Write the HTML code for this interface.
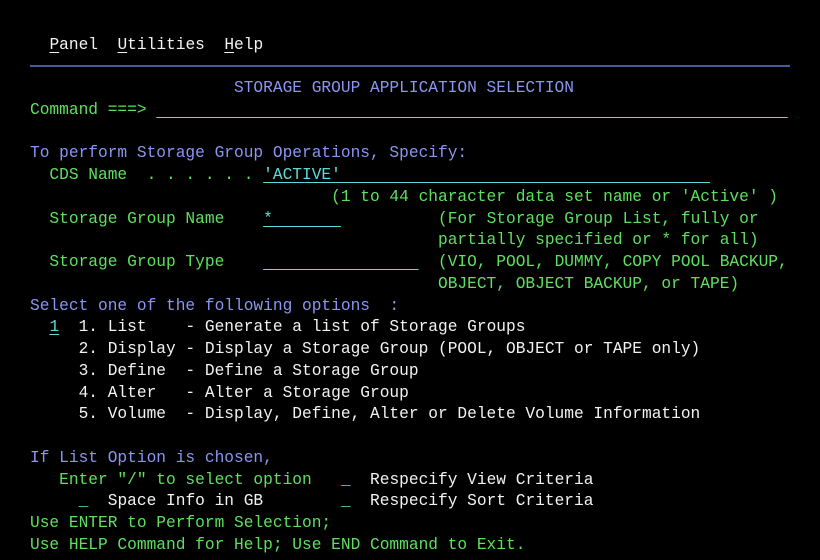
<!DOCTYPE html>
<html><head><meta charset="utf-8"><style>
html,body{margin:0;padding:0;background:#000;width:820px;height:560px;overflow:hidden}
.r{position:absolute;left:30px;height:22px;line-height:22px;font-family:"Liberation Mono",monospace;font-size:16.2px;white-space:pre;color:#f0f0f0}
.w{color:#f2f2f2}.g{color:#5ee05e}.b{color:#8a96f0}.t{color:#60d8d8}
.u{text-decoration:underline;text-underline-offset:3px}
.sep{position:absolute;left:30px;width:760px;top:65px;height:2px;background:#4a5a9a}
</style></head><body>
<div class="r w" style="top:34px">  <span class="u">P</span>anel  <span class="u">U</span>tilities  <span class="u">H</span>elp</div>
<div class="sep"></div>
<div class="r b" style="top:77px">                     STORAGE GROUP APPLICATION SELECTION</div>
<div class="r g" style="top:99px">Command ===> <span class="t u">                                                                 </span></div>
<div class="r b" style="top:142px">To perform Storage Group Operations, Specify:</div>
<div class="r g" style="top:164px">  CDS Name  . . . . . . <span class="t u">'ACTIVE'                                      </span></div>
<div class="r g" style="top:186px">                               (1 to 44 character data set name or 'Active' )</div>
<div class="r g" style="top:208px">  Storage Group Name    <span class="t u">*       </span>          (For Storage Group List, fully or</div>
<div class="r g" style="top:229px">                                          partially specified or * for all)</div>
<div class="r g" style="top:251px">  Storage Group Type    <span class="t u">                </span>  (VIO, POOL, DUMMY, COPY POOL BACKUP,</div>
<div class="r g" style="top:273px">                                          OBJECT, OBJECT BACKUP, or TAPE)</div>
<div class="r b" style="top:295px">Select one of the following options  :</div>
<div class="r w" style="top:316px">  <span class="t u">1</span>  1. List    - Generate a list of Storage Groups</div>
<div class="r w" style="top:338px">     2. Display - Display a Storage Group (POOL, OBJECT or TAPE only)</div>
<div class="r w" style="top:360px">     3. Define  - Define a Storage Group</div>
<div class="r w" style="top:382px">     4. Alter   - Alter a Storage Group</div>
<div class="r w" style="top:403px">     5. Volume  - Display, Define, Alter or Delete Volume Information</div>
<div class="r b" style="top:447px">If List Option is chosen,</div>
<div class="r g" style="top:469px">   Enter "/" to select option   <span class="t">_</span>  <span class="w">Respecify View Criteria</span></div>
<div class="r w" style="top:490px">     <span class="t">_</span>  Space Info in GB        <span class="t">_</span>  Respecify Sort Criteria</div>
<div class="r g" style="top:512px">Use ENTER to Perform Selection;</div>
<div class="r g" style="top:534px">Use HELP Command for Help; Use END Command to Exit.</div>
</body></html>
